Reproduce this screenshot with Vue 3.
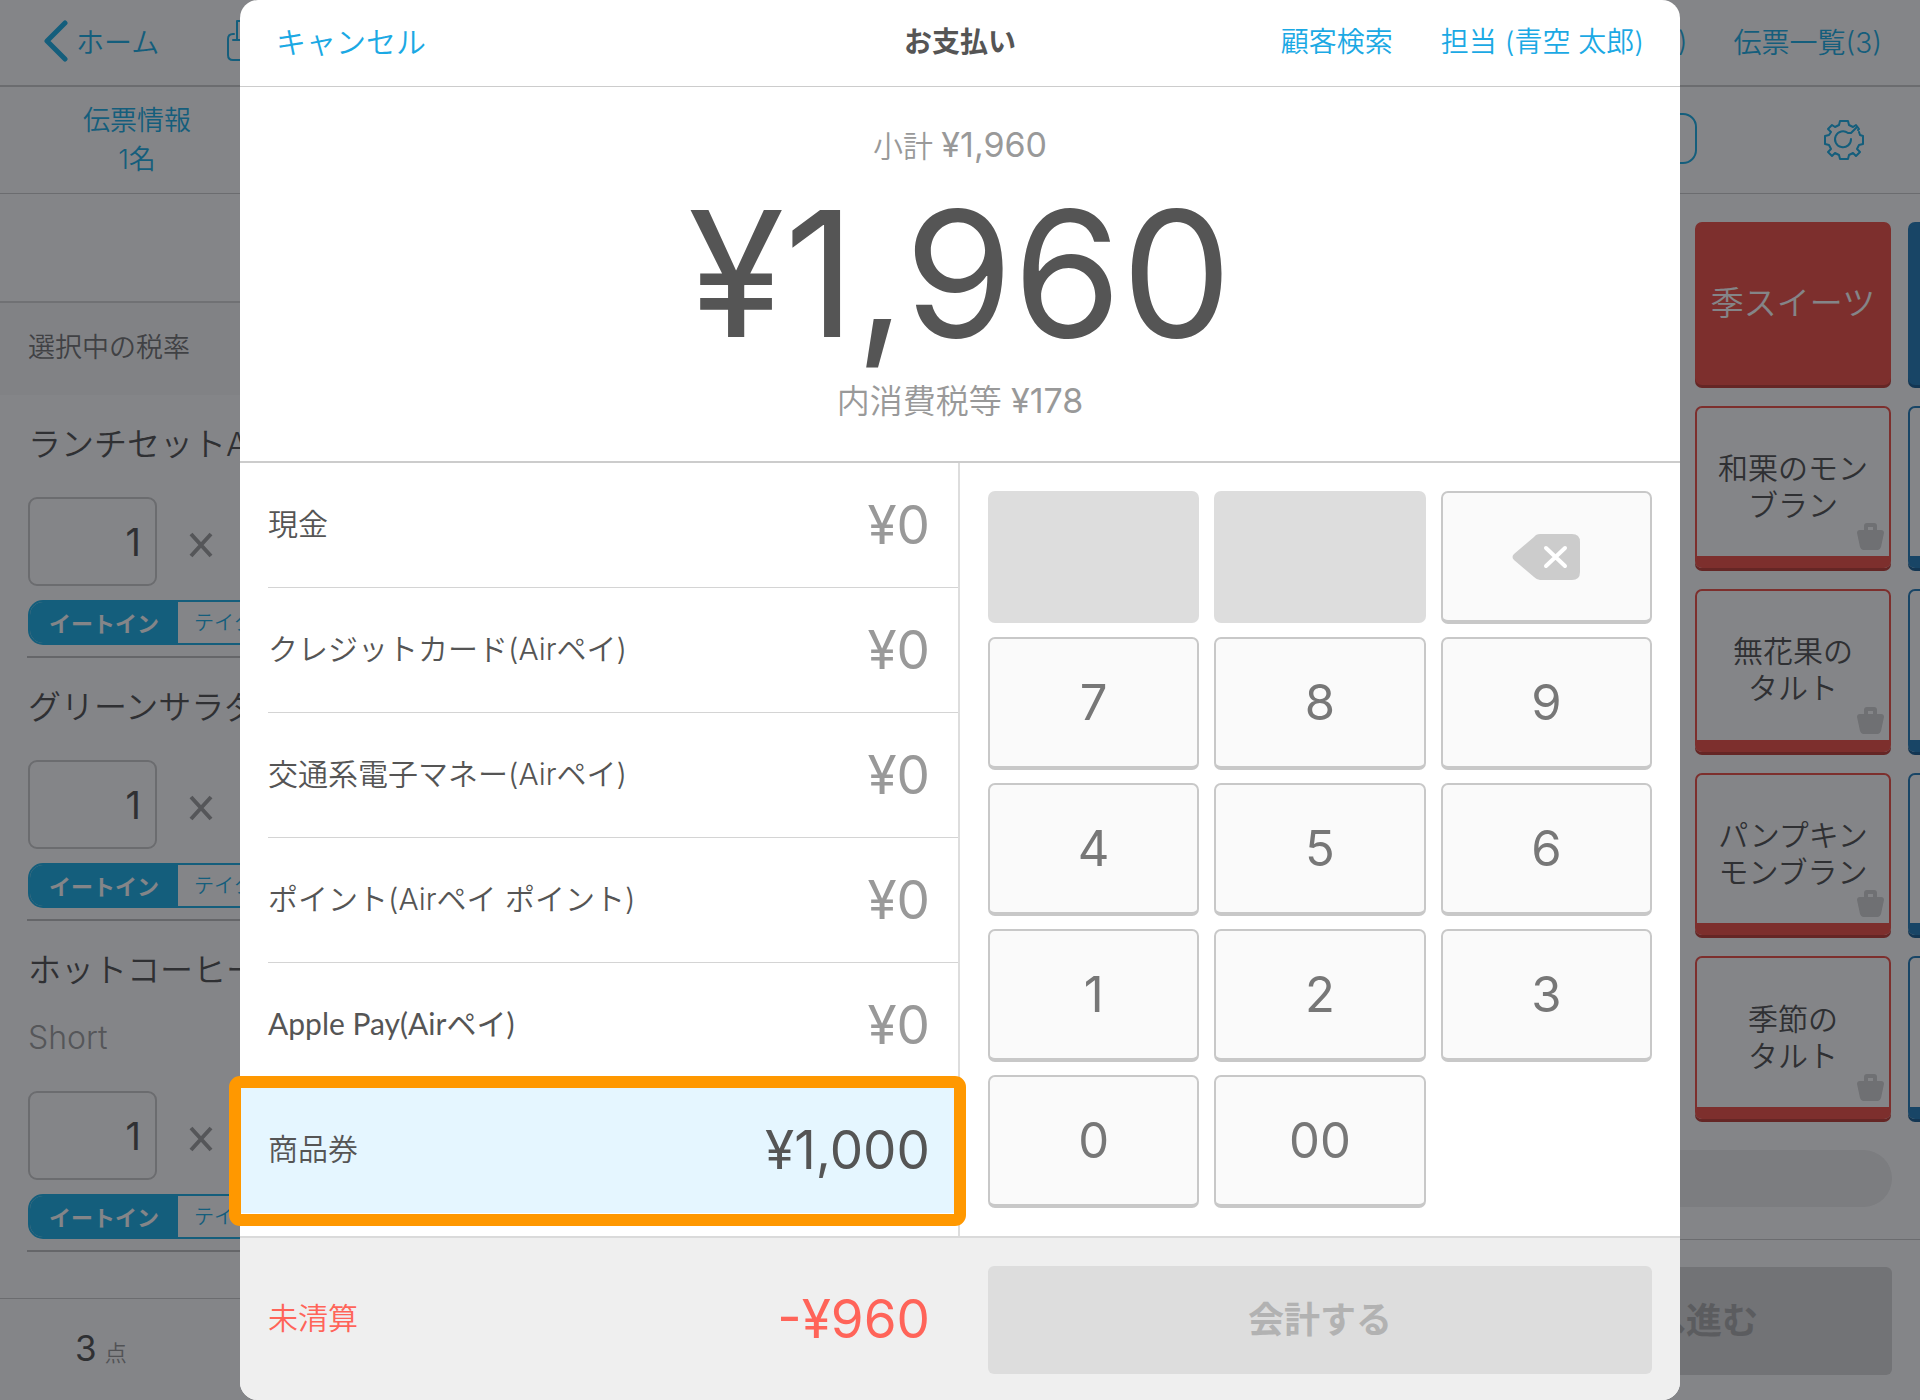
<template>
  <div class="register">
    <!-- Order screen -->
    <header class="topbar">
      <a href="#" class="nav-link">
        <svg class="icon-back" viewBox="0 0 24 42" aria-hidden="true">
          <path d="M21 3 L3 21 L21 39" />
        </svg>
        ホーム
      </a>
      <button class="icon-button icon-button-slip" aria-label="伝票を出力">
        <svg class="icon-slip" viewBox="0 0 44 44" aria-hidden="true">
          <path d="M7 15 H6 Q1 15 1 20 V36 Q1 41 6 41 H38 Q43 41 43 36 V20 Q43 15 38 15 H37" />
          <path d="M10 2 H34 V21 M10 2 V21 M6 21 H38" />
        </svg>
      </button>
      <div class="topbar-right">
        <a href="#" class="nav-link" aria-label="担当">)</a>
        <a href="#" class="nav-link">伝票一覧(3)</a>
      </div>
    </header>

    <div class="subbar">
      <a href="#" class="slip-info">伝票情報<br />1名</a>
      <div class="subbar-right">
        <button class="outline-button" aria-label="メニュー"></button>
        <button class="icon-button" aria-label="設定">
          <svg class="icon-gear" viewBox="0 0 40 40" aria-hidden="true">
            <path
              d="M34 10 L35 9 L32 5 L29 7 L25 5 L24 1 H16 L15 5 L11 7 L8 5 L4 9 L7 12 L5 15 L1 16 V24 L5 25 L7 29 L4 32 L8 36 L11 33 L15 35 L16 39 H24 L25 35 L29 33 L32 36 L36 32 L33 29 L35 25 L39 24 V16 L36 15 L35 12"
            />
            <path d="M27 19 A8 8 0 1 1 24 13 H27 L33 7" />
          </svg>
        </button>
      </div>
    </div>

    <main class="workspace">
      <section class="order-panel">
        <div class="order-blank"></div>
        <div class="tax-row">選択中の税率</div>
        <ul class="order-list">
          <li v-for="item in orderItems" :key="item.name" class="order-item">
            <p class="item-name">{{ item.name }}</p>
            <p v-if="item.variant" class="item-variant">{{ item.variant }}</p>
            <div class="item-qty">
              <input v-model="item.qty" class="qty-input" type="text" :aria-label="item.name" />
              <svg class="icon-times" viewBox="0 0 24 26" aria-hidden="true">
                <path d="M2 2 L22 24 M22 2 L2 24" />
              </svg>
            </div>
            <div class="segment">
              <button
                v-for="option in serveOptions"
                :key="option"
                class="segment-button"
                :class="{ active: item.serve === option }"
                @click="item.serve = option"
              >
                {{ option }}
              </button>
            </div>
          </li>
        </ul>
        <div class="order-count"><strong>3</strong><span>点</span></div>
      </section>

      <section class="menu-panel">
        <div class="tile-grid">
          <template v-for="tile in tiles" :key="tile.label">
            <button class="tile" :class="{ category: tile.category }">
              {{ tile.label }}
              <svg v-if="!tile.category" class="icon-bag" viewBox="0 0 27 27" aria-hidden="true">
                <path
                  fill-rule="evenodd"
                  d="M7 7 V3 Q7 0 10 0 H17 Q20 0 20 3 V7 H24 Q27 7 27 10 L24 24 Q23 27 21 27 H6 Q4 27 3 24 L0 10 Q0 7 3 7 Z M11 4 V7 H16 V4 Z"
                />
              </svg>
            </button>
            <button class="tile blue" :class="{ category: tile.category }" aria-label="商品"></button>
          </template>
        </div>
        <div class="search-pill"></div>
        <div class="menu-footer">
          <button class="proceed-button" disabled>会計へ進む</button>
        </div>
      </section>
    </main>

    <!-- Payment dialog -->
    <div class="backdrop">
      <div class="dialog" role="dialog" aria-labelledby="payment-title">
        <header class="dialog-header">
          <div class="header-side">
            <button class="text-button cancel">キャンセル</button>
          </div>
          <h1 id="payment-title" class="dialog-title">お支払い</h1>
          <div class="header-side header-side-right">
            <button class="text-button">顧客検索</button>
            <button class="text-button">担当 (青空 太郎)</button>
          </div>
        </header>

        <section class="summary">
          <p class="subtotal">小計 <span>¥1,960</span></p>
          <p class="total">¥1,960</p>
          <p class="tax">内消費税等 <span>¥178</span></p>
        </section>

        <div class="dialog-body">
          <ul class="methods">
            <li v-for="(m, i) in methods" :key="m.name" class="method-item">
              <button class="method" :class="{ selected: selected === i }" @click="selected = i">
                <span class="method-name" :class="{ latin: m.latin }">{{ m.name }}</span>
                <span class="method-amount">{{ yen(m.amount) }}</span>
              </button>
              <span v-if="selected === i" class="focus-frame"></span>
            </li>
          </ul>

          <div class="keypad">
            <button class="key empty" disabled aria-label="未使用"></button>
            <button class="key empty" disabled aria-label="未使用"></button>
            <button class="key" aria-label="削除" @click="erase">
              <svg class="icon-erase" viewBox="0 0 68 46" aria-hidden="true">
                <path class="erase-shape" d="M25 0 H60 Q68 0 68 8 V38 Q68 46 60 46 H28 Q25 46 22 43 L2 26 Q-1 23 2 20 L22 3 Q24 0 28 0 Z" />
                <path class="erase-cross" d="M34 14 L53 32 M53 14 L34 32" />
              </svg>
            </button>
            <button v-for="k in keys" :key="k" class="key" @click="press(k)">{{ k }}</button>
          </div>
        </div>

        <footer class="dialog-footer">
          <div class="balance">
            <span class="balance-label">未清算</span>
            <span class="balance-amount">{{ yen(methodTotal - total) }}</span>
          </div>
          <div class="checkout">
            <button class="checkout-button" :disabled="methodTotal < total">会計する</button>
          </div>
        </footer>
      </div>
    </div>
  </div>
</template>

<script setup>
import { ref, reactive, computed } from 'vue'

const total = 1960
const serveOptions = ['イートイン', 'テイク']
const keys = ['7', '8', '9', '4', '5', '6', '1', '2', '3', '0', '00']

const orderItems = reactive([
  { name: 'ランチセットA', qty: '1', serve: 'イートイン' },
  { name: 'グリーンサラダ', qty: '1', serve: 'イートイン' },
  { name: 'ホットコーヒー', variant: 'Short', qty: '1', serve: 'イートイン' },
])

const tiles = [
  { label: '季スイーツ', category: true },
  { label: '和栗のモン\nブラン' },
  { label: '無花果の\nタルト' },
  { label: 'パンプキン\nモンブラン' },
  { label: '季節の\nタルト' },
]

const methods = reactive([
  { name: '現金', amount: 0 },
  { name: 'クレジットカード(Airペイ)', amount: 0 },
  { name: '交通系電子マネー(Airペイ)', amount: 0 },
  { name: 'ポイント(Airペイ ポイント)', amount: 0 },
  { name: 'Apple Pay(Airペイ)', amount: 0, latin: true },
  { name: '商品券', amount: 1000 },
])

const selected = ref(5)

const methodTotal = computed(() => methods.reduce((sum, m) => sum + m.amount, 0))

function yen(value) {
  const sign = value < 0 ? '-' : ''
  return sign + '¥' + Math.abs(value).toLocaleString('en-US')
}

function press(key) {
  const method = methods[selected.value]
  method.amount = Number(String(method.amount) + key)
}

function erase() {
  const method = methods[selected.value]
  method.amount = Math.floor(method.amount / 10)
}
</script>

<style>
body {
  margin: 0;
}
</style>

<style scoped>
.register {
  position: relative;
  display: flex;
  flex-direction: column;
  min-height: 100vh;
  overflow: hidden;
  background: #ffffff;
  color: #555555;
  font-family: Inter, 'Noto Sans CJK JP', sans-serif;
  font-weight: 350;
}

.register * {
  box-sizing: border-box;
}

button,
input {
  font: inherit;
  color: inherit;
  padding: 0;
  margin: 0;
  border: none;
  background: none;
}

button {
  cursor: pointer;
}

p,
ul,
h1 {
  margin: 0;
  padding: 0;
  list-style: none;
}

a {
  color: #1fb0e6;
  text-decoration: none;
}

svg {
  fill: none;
  stroke: #1fb0e6;
  stroke-width: 2;
  stroke-linecap: round;
  stroke-linejoin: round;
}

/* Order screen bars */
.topbar {
  display: flex;
  align-items: center;
  height: 87px;
  padding: 0 38px 4px 44px;
  border-bottom: 2px solid #cccccc;
  font-size: 28px;
}

.nav-link {
  display: flex;
  align-items: center;
  gap: 8px;
}

.icon-back {
  width: 24px;
  height: 42px;
  stroke-width: 5;
}

.icon-button-slip {
  margin-left: 68px;
}

.icon-slip {
  display: block;
  width: 44px;
  height: 44px;
}

.topbar-right {
  display: flex;
  gap: 46px;
  margin-left: auto;
}

.subbar {
  display: flex;
  align-items: center;
  justify-content: space-between;
  height: 107px;
  padding: 0 56px 0 83px;
  border-bottom: 1px solid #cccccc;
}

.slip-info {
  font-size: 27px;
  line-height: 39px;
  text-align: center;
}

.subbar-right {
  display: flex;
  align-items: center;
  gap: 127px;
}

.outline-button {
  width: 240px;
  height: 51px;
  margin-bottom: 4px;
  border: 2px solid #1fb0e6;
  border-radius: 14px;
}

.icon-gear {
  display: block;
  width: 40px;
  height: 40px;
}

.workspace {
  display: flex;
  flex: 1;
}

/* Order list */
.order-panel {
  display: flex;
  flex-direction: column;
  flex: 0 0 40%;
}

.order-blank {
  height: 109px;
  border-bottom: 2px solid #d6d6d6;
}

.tax-row {
  height: 92px;
  padding-left: 28px;
  background: #f9f9f9;
  color: #777777;
  font-size: 27px;
  line-height: 90px;
}

.order-list {
  flex: 1;
}

.order-item {
  margin-left: 27px;
  padding: 25px 0 11px 1px;
  border-bottom: 2px solid #c0c0c0;
}

.item-name {
  font-size: 33px;
  line-height: 48px;
}

.item-variant {
  margin-top: 20px;
  color: #a0a0a0;
  font-size: 32px;
  line-height: 48px;
}

.item-qty {
  display: flex;
  align-items: center;
  gap: 32px;
  margin: 29px 0 14px;
}

.qty-input {
  width: 129px;
  height: 89px;
  padding: 0 14px 0 0;
  border: 2px solid #cccccc;
  border-radius: 9px;
  font-size: 38px;
  font-weight: 400;
  text-align: right;
}

.icon-times {
  width: 24px;
  height: 26px;
  margin-top: 6px;
  stroke: #a0a0a0;
  stroke-width: 4;
  stroke-linecap: butt;
}

.segment {
  display: flex;
  width: 300px;
  height: 45px;
  overflow: hidden;
  border: 2px solid #1fb0e6;
  border-radius: 15px;
}

.segment-button {
  width: 50%;
  padding: 0 0 2px 16px;
  color: #1fb0e6;
  font-size: 20px;
  text-align: left;
  white-space: nowrap;
}

.segment-button.active {
  padding-left: 0;
  background: #1fb0e6;
  color: #ffffff;
  font-size: 22px;
  font-weight: 600;
  text-align: center;
}

.order-count {
  display: flex;
  align-items: baseline;
  gap: 8px;
  height: 102px;
  padding: 27px 0 0 75px;
  border-top: 1px solid #cccccc;
  line-height: 44px;
}

.order-count strong {
  font-size: 35px;
  font-weight: 400;
}

.order-count span {
  color: #999999;
  font-size: 22px;
}

/* Menu tiles */
.menu-panel {
  display: flex;
  flex-direction: column;
  flex: 1;
  overflow: hidden;
}

.tile-grid {
  display: grid;
  flex: 1;
  grid-template-columns: 196px 196px;
  grid-auto-rows: 1fr;
  gap: 18px 17px;
  justify-content: end;
  margin: 28px -184px 28px 0;
}

.tile {
  position: relative;
  margin-bottom: 3px;
  padding-top: 10px;
  border: 2px solid #f05248;
  border-bottom-width: 12px;
  border-radius: 7px;
  box-shadow: 0 3px 0 #c04038;
  font-size: 30px;
  line-height: 37px;
  white-space: pre-line;
}

.tile.category {
  padding: 0;
  border-bottom-width: 2px;
  background: #f05248;
  color: #ffffff;
  font-size: 33px;
}

.tile.blue {
  border-color: #267ebb;
  box-shadow: 0 3px 0 #1c6194;
}

.tile.blue.category {
  background: #267ebb;
}

.icon-bag {
  position: absolute;
  right: 5px;
  bottom: 6px;
  width: 27px;
  height: 27px;
  fill: #d4d4d4;
  stroke: none;
}

.search-pill {
  height: 57px;
  margin: 0 28px 32px;
  border-radius: 29px;
  background: #eeeeee;
}

.menu-footer {
  display: flex;
  justify-content: flex-end;
  padding: 27px 28px 25px;
  border-top: 1px solid #cccccc;
}

.proceed-button {
  width: 448px;
  height: 108px;
  padding-bottom: 6px;
  border-radius: 6px;
  background: #dadada;
  color: #adadad;
  font-size: 36px;
  font-weight: 600;
}

/* Payment dialog */
.backdrop {
  position: absolute;
  inset: 0;
  display: flex;
  justify-content: center;
  background: rgba(10, 12, 18, 0.5);
}

.dialog {
  display: flex;
  flex-direction: column;
  width: 75%;
  border-radius: 18px;
  background: #ffffff;
}

.dialog-header {
  display: flex;
  align-items: center;
  height: 87px;
  padding: 0 36px 6px;
  border-bottom: 1px solid #cccccc;
  font-size: 28px;
}

.header-side {
  display: flex;
  flex: 1;
}

.header-side-right {
  gap: 48px;
  justify-content: flex-end;
}

.text-button {
  color: #1ba9e4;
  white-space: nowrap;
}

.text-button.cancel {
  font-size: 30px;
}

.dialog-title {
  font-size: 28px;
  font-weight: 600;
}

.summary {
  display: flex;
  flex-direction: column;
  height: 376px;
  padding-top: 33px;
  border-bottom: 2px solid #cccccc;
  color: #999999;
  text-align: center;
}

.subtotal,
.tax {
  font-size: 30px;
  line-height: 50px;
}

.tax {
  font-size: 33px;
}

.subtotal span,
.tax span {
  font-size: 34px;
  font-weight: 400;
}

.total {
  color: #555555;
  font-size: 175px;
  font-weight: 400;
  line-height: 205px;
}

.dialog-body {
  display: flex;
  flex: 1;
}

.methods {
  width: 50%;
  border-right: 2px solid #dddddd;
}

.method-item {
  position: relative;
}

.method {
  display: flex;
  align-items: center;
  justify-content: space-between;
  width: 100%;
  height: 125px;
  padding: 0 28px 2px;
  text-align: left;
}

/* Divider starts at the label, not at the dialog edge */
.method-item:not(:last-child)::after {
  content: '';
  display: block;
  height: 1px;
  margin: -1px 0 0 28px;
  background: #d4d4d4;
}

.method.selected {
  background: #e5f6ff;
}

.method-name,
.balance-label {
  padding-bottom: 6px;
  font-size: 30px;
}

.method-name.latin {
  font-family: Lato, 'Noto Sans CJK JP', sans-serif;
  font-weight: 400;
}

.method-amount,
.balance-amount {
  font-size: 53px;
  font-weight: 400;
}

.method-amount {
  color: #999999;
}

.method.selected .method-amount {
  color: #555555;
}

.focus-frame {
  position: absolute;
  inset: -12px -8px -13px -11px;
  border: 12px solid #ff9800;
  border-radius: 11px;
  pointer-events: none;
}

.keypad {
  display: grid;
  width: 50%;
  grid-template-columns: repeat(3, 1fr);
  grid-auto-rows: 133px;
  gap: 13px 15px;
  padding: 28px;
}

.key {
  display: flex;
  align-items: center;
  justify-content: center;
  border: 2px solid #c8c8c8;
  border-bottom-width: 4px;
  border-radius: 7px;
  background: #fafafa;
  color: #777777;
  font-size: 49px;
  font-weight: 400;
}

.key.empty {
  margin-bottom: 1px;
  border: none;
  background: #dddddd;
}

.icon-erase {
  width: 68px;
  height: 46px;
}

.erase-shape {
  fill: #cccccc;
  stroke: none;
}

.erase-cross {
  stroke: #ffffff;
  stroke-width: 4;
}

.dialog-footer {
  display: flex;
  height: 164px;
  border-top: 2px solid #dadada;
  border-radius: 0 0 18px 18px;
  background: #efefef;
}

.balance {
  display: flex;
  width: 50%;
  align-items: center;
  justify-content: space-between;
  padding: 0 30px 0 28px;
  color: #ff6459;
}

.checkout {
  width: 50%;
  padding: 28px 28px 26px;
}

.checkout-button {
  width: 100%;
  height: 100%;
  padding-bottom: 6px;
  border-radius: 6px;
  background: #dddddd;
  color: #b2b2b2;
  font-size: 36px;
  font-weight: 600;
}
</style>
